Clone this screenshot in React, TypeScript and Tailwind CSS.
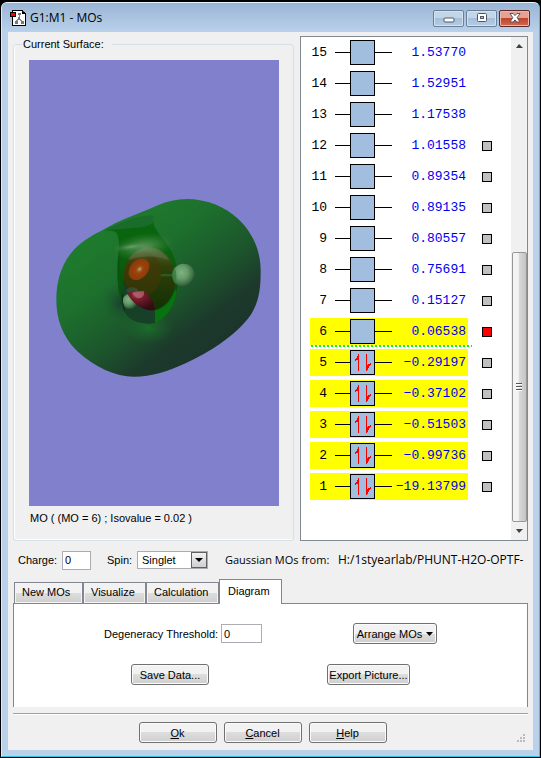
import { useState } from "react"
import clsx from "clsx"

const orbitals = [
  { n: 15, energy: "1.53770" },
  { n: 14, energy: "1.52951" },
  { n: 13, energy: "1.17538" },
  { n: 12, energy: "1.01558", box: true },
  { n: 11, energy: "0.89354", box: true },
  { n: 10, energy: "0.89135", box: true },
  { n: 9, energy: "0.80557", box: true },
  { n: 8, energy: "0.75691", box: true },
  { n: 7, energy: "0.15127", box: true },
  { n: 6, energy: "0.06538", box: true, selected: true, current: true, lumo: true },
  { n: 5, energy: "−0.29197", box: true, selected: true, occupied: true },
  { n: 4, energy: "−0.37102", box: true, selected: true, occupied: true },
  { n: 3, energy: "−0.51503", box: true, selected: true, occupied: true },
  { n: 2, energy: "−0.99736", box: true, selected: true, occupied: true },
  { n: 1, energy: "−19.13799", box: true, selected: true, occupied: true },
]

const tabs = [
  { label: "New MOs", width: "w-[69px]" },
  { label: "Visualize", width: "w-[63px]" },
  { label: "Calculation", width: "w-[73px]" },
  { label: "Diagram", width: "w-[63px]" },
]

const buttonClass =
  "flex h-[21px] items-center justify-center rounded-[3px] border border-[#707070] bg-linear-to-b from-[#f2f2f2] from-50% via-[#dddddd] via-50% to-[#cfcfcf] shadow-[inset_0_0_0_1px_#fbfbfb] whitespace-nowrap"

const inputClass = "h-[19px] border border-[#abadb3] bg-white px-1 outline-none"

function AppIcon() {
  return (
    <svg width="16" height="16" viewBox="0 0 16 16" shapeRendering="crispEdges">
      <path d="M2.5 .5h10l3 3v12h-13z" fill="#fff" stroke="#000" />
      <path d="M12 1h1v1h1v1h1v1h-3z" fill="#000" />
      <path d="M13 1h1v1h-1z" fill="#f00" />
      <path d="M9 4v5M9 8l-3 4M9 8l3 4" stroke="#8a8a8a" fill="none" />
      <path d="M8 3h3v2H8zM8 7h2v3H8zM5 11h3v3H5zM11 11h3v3h-3z" fill="#777" />
      <path d="M.5 2.5h5v4h-5z" fill="#f00" stroke="#000" />
    </svg>
  )
}

function CaptionButton({ label, close, children }: { label: string; close?: boolean; children: React.ReactNode }) {
  return (
    <button
      aria-label={label}
      className={clsx(
        "flex h-[17px] w-[31px] items-center justify-center rounded-[2px] border",
        close
          ? "border-[#5c2a2a] bg-linear-to-b from-[#e5a193] from-45% via-[#c0432c] via-50% to-[#cf6a50] shadow-[inset_0_0_0_1px_#eeb5a8]"
          : "border-[#6c7f98] bg-linear-to-b from-[#c3d5e9] from-45% via-[#a5bfdb] via-50% to-[#b5cde5] shadow-[inset_0_0_0_1px_#d3e2f1]"
      )}
    >
      {children}
    </button>
  )
}

function TitleBar() {
  return (
    <header className="flex h-[29px] items-center bg-linear-to-b from-[#9ab5d5] to-[#b9d1ea] pt-px pr-[9px] pl-2">
      <AppIcon />
      <h1 className="flex-1 pl-1 font-['Open_Sans',sans-serif] text-[12px] leading-4">G1:M1 - MOs</h1>
      <div className="flex gap-[2px]">
        <CaptionButton label="Minimize">
          <svg width="12" height="12" viewBox="0 0 12 12">
            <rect x="1" y="6" width="10" height="4" rx="1" fill="#fff" stroke="#535666" />
          </svg>
        </CaptionButton>
        <CaptionButton label="Maximize">
          <svg width="12" height="12" viewBox="0 0 12 12">
            <rect x="1.5" y="1.5" width="9" height="8" rx="1" fill="#fff" stroke="#535666" />
            <rect x="4.5" y="4.5" width="3" height="2" fill="#a5bfdb" stroke="#535666" />
          </svg>
        </CaptionButton>
        <CaptionButton label="Close" close>
          <svg width="12" height="12" viewBox="0 0 12 12">
            <path
              d="M1 1.5h3.2L6 3.6l1.8-2.1H11L8.2 5.7 11 10H7.8L6 7.9 4.2 10H1l2.8-4.3z"
              fill="#fff"
              stroke="#535666"
              strokeLinejoin="round"
            />
          </svg>
        </CaptionButton>
      </div>
    </header>
  )
}

// Lit isosurface around the water molecule, cut open at the front.
function Surface() {
  return (
    <svg viewBox="0 0 250 446" className="h-full w-full" role="img" aria-label="Molecular orbital 6">
      <defs>
        <linearGradient id="shell" x1=".15" y1=".12" x2=".76" y2=".84">
          <stop offset="0" stopColor="#1e7f2c" />
          <stop offset=".35" stopColor="#1d702d" />
          <stop offset=".65" stopColor="#1c552c" />
          <stop offset=".85" stopColor="#1c3a2b" />
          <stop offset="1" stopColor="#1c352b" />
        </linearGradient>
        <radialGradient id="dent">
          <stop offset="0" stopColor="#18352d" stopOpacity=".8" />
          <stop offset=".5" stopColor="#1a4a30" stopOpacity=".45" />
          <stop offset="1" stopColor="#1a5a30" stopOpacity="0" />
        </radialGradient>
        <radialGradient id="lift">
          <stop offset="0" stopColor="#1b7a29" stopOpacity=".7" />
          <stop offset="1" stopColor="#1b6a29" stopOpacity="0" />
        </radialGradient>
        <linearGradient id="cavity" x1="0" y1="0" x2="0" y2="1">
          <stop offset="0" stopColor="#08690e" />
          <stop offset=".35" stopColor="#0a610e" />
          <stop offset=".7" stopColor="#08500b" />
          <stop offset="1" stopColor="#0a6d12" />
        </linearGradient>
        <radialGradient id="gloss">
          <stop offset="0" stopColor="#79a878" stopOpacity=".8" />
          <stop offset=".5" stopColor="#4c8c4c" stopOpacity=".5" />
          <stop offset="1" stopColor="#2a7a2e" stopOpacity="0" />
        </radialGradient>
        <linearGradient id="oxygen" x1="0" y1="0" x2="0" y2="1">
          <stop offset="0" stopColor="#4e6a34" />
          <stop offset=".3" stopColor="#304008" />
          <stop offset="1" stopColor="#123004" />
        </linearGradient>
        <radialGradient id="core" cx=".52" cy=".48" r=".5">
          <stop offset="0" stopColor="#b8b078" />
          <stop offset=".22" stopColor="#a05a20" />
          <stop offset=".4" stopColor="#9a420c" />
          <stop offset="1" stopColor="#8c3a08" />
        </radialGradient>
        <radialGradient id="hydrogen" cx=".4" cy=".38" r=".62">
          <stop offset="0" stopColor="#80b282" />
          <stop offset=".45" stopColor="#679b69" />
          <stop offset=".8" stopColor="#3f7247" />
          <stop offset="1" stopColor="#23502f" />
        </radialGradient>
        <radialGradient id="ruby" cx=".35" cy=".2" r=".75">
          <stop offset="0" stopColor="#a04a58" />
          <stop offset=".3" stopColor="#7a1c2c" />
          <stop offset="1" stopColor="#310d12" />
        </radialGradient>
        <clipPath id="opening">
          <path d="M190 152L228 148 300 142Q335 136 342 122L340 130C350 165 396 196 408 250C418 320 410 364 388 392C370 418 345 432 325 431C285 430 262 415 250 390C234 345 228 290 236 215Q240 168 226 155Q210 150 190 152z" />
        </clipPath>
      </defs>

      <g transform="translate(11 120) scale(.33333)">
        <path
          d="M440 57C500 57 555 80 594 116C640 160 662 212 662 275C662 335 655 384 612 430C575 472 510 517 440 548C385 574 335 590 282 590C225 590 165 562 112 514C65 468 49 415 49 358C49 295 70 230 125 188C155 165 180 155 210 138C250 115 300 100 350 77C380 64 410 57 440 57z"
          fill="url(#shell)"
        />
        <ellipse cx="325" cy="445" rx="75" ry="45" fill="url(#lift)" />
        <ellipse cx="246" cy="368" rx="62" ry="62" fill="url(#dent)" />
        <path d="M190 152C240 152 300 145 325 136Q341 128 343 108C300 100 240 130 190 152z" fill="#196c2a" />
        <g clipPath="url(#opening)">
          <rect x="180" y="100" width="240" height="340" fill="url(#cavity)" />
          <path d="M232 170Q246 280 240 390L228 390V170z" fill="#0b5410" />
          <ellipse cx="329" cy="297" rx="78" ry="95" fill="url(#oxygen)" />
          <path d="M250 300C262 345 300 380 345 392V440H240z" fill="#183f28" />
          <path d="M345 392Q385 385 405 330L420 340L385 440H345z" fill="#08730e" />
          <ellipse cx="308" cy="280" rx="57" ry="66" fill="#4a3508" opacity=".5" />
        </g>
        <g transform="rotate(-8 305 200)">
          <ellipse cx="310" cy="200" rx="98" ry="40" fill="url(#gloss)" />
          <ellipse cx="275" cy="196" rx="60" ry="13" fill="url(#gloss)" />
        </g>
        <path d="M264 240Q282 205 325 204Q366 208 387 240Q325 218 264 240z" fill="#7c8060" opacity=".35" />
        <path d="M362 282h40v7h-40z" fill="#2e5a22" />
        <ellipse cx="297" cy="268" rx="27" ry="36" transform="rotate(42 297 268)" fill="url(#core)" />
        <ellipse cx="431" cy="286" rx="34" ry="35" fill="url(#hydrogen)" />
        <path d="M403 260Q414 285 406 312Q395 300 397 275z" fill="#2f7a3a" opacity=".7" />
        <ellipse cx="277" cy="331" rx="17" ry="9" fill="#3a4a30" />
        <ellipse cx="270" cy="364" rx="23" ry="23" fill="url(#hydrogen)" />
        <path d="M263 343Q268 333 290 333H312Q340 352 345 390Q330 394 312 387Q280 374 263 343z" fill="url(#ruby)" />
        <path d="M276 339Q282 333 312 334Q314 350 300 355Q284 354 276 339z" fill="#b56a76" opacity=".7" />
        <path d="M247 340Q244 366 254 392" stroke="#0b2b16" strokeWidth="3" fill="none" />
      </g>
    </svg>
  )
}

function SpinArrows() {
  return (
    <svg width="23" height="23" viewBox="0 0 23 23" fill="#ff0000" shapeRendering="crispEdges">
      <path d="M7 3h1v17H7zM6 5h1v4H6zM5 7h1v2H5zM4 8h1v2H4z" />
      <path d="M15 3h1v17h-1zM16 14h1v5h-1zM17 13h1v4h-1zM18 13h1v2h-1zM19 12h1v2h-1z" />
    </svg>
  )
}

function OrbitalRow({ orbital }: { orbital: (typeof orbitals)[number] }) {
  return (
    <li className="relative flex items-center">
      <div className={clsx("flex h-[27px] w-[158px] items-center", orbital.selected && "bg-[#ffff00]")}>
        <span className="w-[17px] text-right">{orbital.n}</span>
        <span className="ml-2 h-px w-[15px] bg-black" />
        <span className="size-[25px] border border-black bg-[#a1bedf]">{orbital.occupied && <SpinArrows />}</span>
        <span className="h-px w-[17px] bg-black" />
        <span className="flex w-[74px] justify-end whitespace-nowrap text-[#0000ee]">{orbital.energy}</span>
      </div>
      {orbital.box && (
        <input
          type="checkbox"
          aria-label={`Orbital ${orbital.n}`}
          defaultChecked={orbital.current}
          className="ml-[14px] size-[10px] appearance-none border border-black bg-[#c0c0c0] checked:bg-[#ff0000]"
        />
      )}
      {orbital.lumo && (
        <span className="absolute top-[27px] left-px h-[2px] w-[161px] bg-[repeating-linear-gradient(90deg,#00ff00_0_2px,transparent_2px_4px)]" />
      )}
    </li>
  )
}

function ScrollBar() {
  return (
    <div className="flex w-4 flex-col items-center bg-[#f0f0f0]">
      <svg width="16" height="16" viewBox="0 0 16 16">
        <path d="M5 11l3-4 4 4z" fill="#404040" />
      </svg>
      <div className="mt-[199px] flex w-[15px] flex-1 flex-col items-center justify-center gap-px rounded-[2px] border border-[#979797] bg-linear-to-r from-[#f4f4f4] from-40% via-[#d8d8d8] via-50% to-[#c4c4c4]">
        <span className="h-[2px] w-[6px] border-t border-[#555] bg-white" />
        <span className="h-[2px] w-[6px] border-t border-[#555] bg-white" />
        <span className="h-[2px] w-[6px] border-t border-[#555] bg-white" />
      </div>
      <svg width="16" height="18" viewBox="0 0 16 18">
        <path d="M5 7l3 4 4-4z" fill="#404040" />
      </svg>
    </div>
  )
}

function DiagramPane() {
  return (
    <div className="flex h-[104px] flex-col gap-5 border border-b-0 border-[#84868f] bg-white pt-[19px]">
      <div className="flex items-center pl-[90px]">
        <label htmlFor="threshold" className="w-[117px]">
          Degeneracy Threshold:
        </label>
        <input id="threshold" defaultValue="0" className={clsx(inputClass, "w-[41px] px-[2px]")} />
        <button className={clsx(buttonClass, "ml-[91px] w-[84px] gap-1")}>
          Arrange MOs
          <svg width="7" height="4" viewBox="0 0 7 4">
            <path d="M0 0h7L3.5 4z" />
          </svg>
        </button>
      </div>
      <div className="flex items-center pl-[117px]">
        <button className={clsx(buttonClass, "w-[78px]")}>Save Data...</button>
        <button className={clsx(buttonClass, "ml-[118px] w-[83px]")}>Export Picture...</button>
      </div>
    </div>
  )
}

export default function App() {
  const [tab, setTab] = useState("Diagram")

  return (
    <div className="min-h-screen bg-black p-px pt-[2px] font-['Liberation_Sans',sans-serif] text-[11px] leading-[14px] text-black">
      <div className="overflow-hidden rounded-t-[6px] border border-t-[#e8f2fb] border-r-[#35c5e0] border-b-[#35c5e0] border-l-[#dcebf8] bg-[#b9d1ea] px-[6px] pb-[6px]">
        <div className="-mx-[6px]">
          <TitleBar />
        </div>
        <main className="bg-[#f0f0f0] px-[5px] pt-[4px]">
          <div className="flex items-start gap-[6px]">
            <fieldset className="flex h-[505px] min-w-0 flex-1 flex-col rounded-[3px] border border-[#d5dfe5] pr-[14px] pl-[15px] shadow-[inset_1px_0_#fff,inset_0_-1px_#fff]">
              <legend className="-ml-[7px] pr-2 pl-px leading-[17px]">Current Surface:</legend>
              <div className="mt-[7px] h-[446px] bg-[#8080cc]">
                <Surface />
              </div>
              <p className="mt-[5px] pl-px">MO ( (MO = 6) ; Isovalue = 0.02 )</p>
            </fieldset>
            <div className="flex h-[505px] w-[228px] border border-[#828790] bg-white">
              <ul className="flex flex-1 flex-col gap-1 pt-[2px] pl-[9px] font-['Liberation_Mono',monospace] text-[13px]">
                {orbitals.map((orbital) => (
                  <OrbitalRow key={orbital.n} orbital={orbital} />
                ))}
              </ul>
              <ScrollBar />
            </div>
          </div>

          <div className="mt-[9px] flex h-5 items-center pl-[5px]">
            <label htmlFor="charge" className="w-[44px]">
              Charge:
            </label>
            <input id="charge" defaultValue="0" className={clsx(inputClass, "w-[29px] px-[2px]")} />
            <label htmlFor="spin" className="ml-4 w-[30px]">
              Spin:
            </label>
            <div className="relative">
              <select
                id="spin"
                className="block h-[18px] w-[71px] appearance-none border border-[#abadb3] bg-white pl-1 outline-none"
              >
                <option>Singlet</option>
              </select>
              <span className="pointer-events-none absolute top-px right-px flex h-4 w-4 items-center justify-center border border-[#606060] bg-linear-to-b from-[#f2f2f2] to-[#cfcfcf]">
                <svg width="8" height="4" viewBox="0 0 8 4">
                  <path d="M0 0h8L4 4z" />
                </svg>
              </span>
            </div>
            <p className="ml-[17px] w-[113px] font-['Open_Sans',sans-serif] text-[11px] whitespace-nowrap">
              Gaussian MOs from:
            </p>
            <p className="font-['Open_Sans',sans-serif] text-[12px] whitespace-nowrap">H:/1styearlab/PHUNT-H2O-OPTF-</p>
          </div>

          <div role="tablist" className="mt-[9px] -mb-px flex h-[25px] items-end pl-px">
            {tabs.map(({ label, width }) => (
              <button
                key={label}
                role="tab"
                aria-selected={tab === label}
                onClick={() => setTab(label)}
                className={clsx(
                  "relative border border-[#84868f] pb-[3px] text-left",
                  width,
                  tab === label
                    ? "h-[25px] border-b-0 bg-white pl-2"
                    : "h-[22px] bg-linear-to-b from-[#f2f2f2] from-50% via-[#dddddd] via-50% to-[#cfcfcf] pl-[7px] shadow-[inset_0_0_0_1px_#f4f4f4]"
                )}
              >
                {label}
              </button>
            ))}
          </div>
          <DiagramPane />

          <footer className="mt-[6px] grid h-[37px] grid-cols-[1fr_auto_1fr] border-t border-[#a0a0a0] pt-2 shadow-[inset_0_1px_#fff]">
            <div className="col-start-2 mr-4 flex gap-[7px]">
              <button className={clsx(buttonClass, "w-[78px]")}>
                <span>
                  <u>O</u>k
                </span>
              </button>
              <button className={clsx(buttonClass, "w-[78px]")}>
                <span>
                  <u>C</u>ancel
                </span>
              </button>
              <button className={clsx(buttonClass, "w-[78px]")}>
                <span>
                  <u>H</u>elp
                </span>
              </button>
            </div>
            <svg width="10" height="10" viewBox="0 0 10 10" fill="#bcbcbc" className="mr-[2px] mb-[7px] self-end justify-self-end">
              <path d="M7 1h2v2H7zM7 4h2v2H7zM7 7h2v2H7zM4 4h2v2H4zM4 7h2v2H4zM1 7h2v2H1z" />
            </svg>
          </footer>
        </main>
      </div>
    </div>
  )
}
